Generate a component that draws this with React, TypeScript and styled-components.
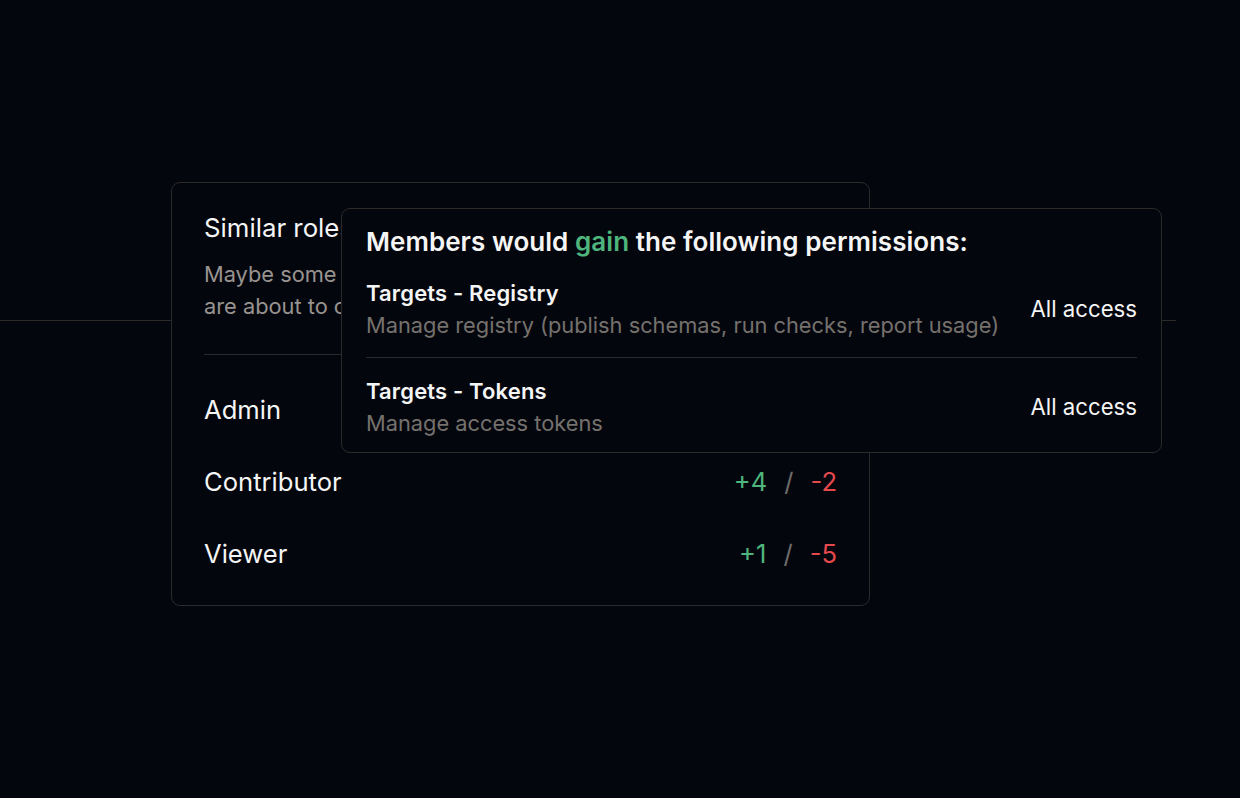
import React from "react";
import styled, { createGlobalStyle } from "styled-components";

const GlobalStyle = createGlobalStyle`
  html, body {
    margin: 0;
    padding: 0;
    background-color: #04060e;
  }
  body {
    font-family: Inter, "Noto Sans", "Liberation Sans", sans-serif;
    color: #f4f4f5;
    -webkit-font-smoothing: antialiased;
  }
  * { box-sizing: border-box; }
`;

const Page = styled.div`
  min-height: 798px;
  padding: 182px 0 0 171px;
  background-color: #04060e;
  background-image: linear-gradient(#2c2a28, #2c2a28);
  background-repeat: no-repeat;
  background-position: 0 320px;
  background-size: 1176px 1px;
`;

const Card = styled.section`
  position: relative;
  width: 699px;
  border: 1px solid #2c2a28;
  border-radius: 9px;
  background: #04060e;
  padding: 29px 32px 15px;
`;

const CardTitle = styled.h2`
  margin: 0;
  font-size: 25.8px;
  line-height: 32px;
  font-weight: 400;
  color: #f5f5f5;
`;

const CardDesc = styled.p`
  margin: 14px 0 0;
  font-size: 21.8px;
  line-height: 32px;
  color: #98938e;
`;

const Divider = styled.hr`
  margin: 32px 0 19px;
  border: 0;
  border-top: 1px solid #2c2a28;
`;

const RoleRow = styled.div`
  display: flex;
  align-items: center;
  justify-content: space-between;
  height: 72px;
  font-size: 25.6px;
  line-height: 32px;
`;

const RoleName = styled.span`
  color: #f5f5f5;
`;

const Counts = styled.span`
  display: flex;
  align-items: center;
  gap: 17px;
`;

const Count = styled.span<{ $tone: "gain" | "loss" | "sep" }>`
  color: ${(p) =>
    p.$tone === "gain" ? "#4eb57c" : p.$tone === "loss" ? "#e5484d" : "#6e6b69"};
`;

const Popover = styled.div`
  position: absolute;
  left: 169px;
  top: 25px;
  width: 821px;
  border: 1px solid #2c2a28;
  border-radius: 9px;
  background: #04060e;
  padding: 17px 24px 0;
`;

const PopTitle = styled.h3`
  margin: 0;
  font-size: 26px;
  line-height: 32px;
  font-weight: 600;
  color: #f5f5f5;
  letter-spacing: 0.05px;
`;

const Gain = styled.span`
  color: #4eb57c;
`;

const PermRow = styled.div`
  display: flex;
  align-items: center;
  justify-content: space-between;
  padding: 17px 0 16px;
  border-bottom: 1px solid #2c2a28;
  &:first-of-type {
    padding-top: 19px;
  }
  &:last-of-type {
    border-bottom: 0;
    padding-bottom: 13px;
  }
`;

const PermText = styled.div`
  display: flex;
  flex-direction: column;
`;

const PermName = styled.span`
  font-size: 22px;
  line-height: 32px;
  font-weight: 600;
  letter-spacing: 0.15px;
  color: #f5f5f5;
`;

const PermDesc = styled.span`
  font-size: 21.8px;
  line-height: 32px;
  color: #75716d;
`;

const Access = styled.span`
  font-size: 22.2px;
  line-height: 32px;
  color: #f5f5f5;
`;

const roles = [
  { name: "Admin", gain: null, loss: null },
  { name: "Contributor", gain: "+4", loss: "-2" },
  { name: "Viewer", gain: "+1", loss: "-5" },
];

const perms = [
  {
    name: "Targets - Registry",
    desc: "Manage registry (publish schemas, run checks, report usage)",
    access: "All access",
  },
  { name: "Targets - Tokens", desc: "Manage access tokens", access: "All access" },
];

export default function App() {
  return (
    <>
      <GlobalStyle />
      <Page>
        <Card>
          <CardTitle>Similar roles</CardTitle>
          <CardDesc>
            Maybe some of the existing roles are similar to the one you
            <br />
            are about to create.
          </CardDesc>
          <Divider />
          {roles.map((r) => (
            <RoleRow key={r.name}>
              <RoleName>{r.name}</RoleName>
              {r.gain && (
                <Counts>
                  <Count $tone="gain">{r.gain}</Count>
                  <Count $tone="sep">/</Count>
                  <Count $tone="loss">{r.loss}</Count>
                </Counts>
              )}
            </RoleRow>
          ))}
          <Popover>
            <PopTitle>
              Members would <Gain>gain</Gain> the following permissions:
            </PopTitle>
            {perms.map((p) => (
              <PermRow key={p.name}>
                <PermText>
                  <PermName>{p.name}</PermName>
                  <PermDesc>{p.desc}</PermDesc>
                </PermText>
                <Access>{p.access}</Access>
              </PermRow>
            ))}
          </Popover>
        </Card>
      </Page>
    </>
  );
}
